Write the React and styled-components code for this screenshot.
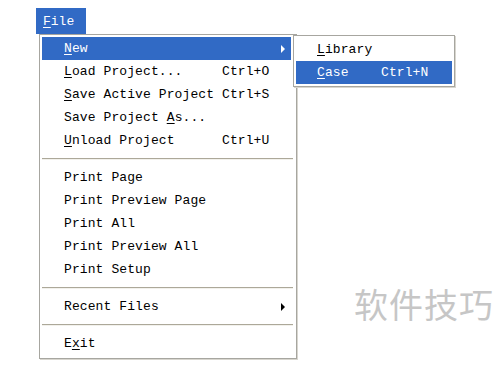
import React from "react";
import styled, { createGlobalStyle } from "styled-components";

const GlobalStyle = createGlobalStyle`
  html, body {
    margin: 0;
    padding: 0;
    background: #ffffff;
  }
  body {
    font-family: "Liberation Mono", "Noto Sans CJK SC", monospace;
  }
`;

const Page = styled.div`
  position: relative;
  width: 500px;
  height: 368px;
  overflow: hidden;
  background: #ffffff;
  padding: 8px 0 0 36px;
  box-sizing: border-box;
  display: flex;
  flex-direction: column;
  align-items: flex-start;
`;

const MenuTab = styled.div`
  width: 50px;
  height: 26px;
  box-sizing: border-box;
  padding-left: 7px;
  display: flex;
  align-items: center;
  background: #316ac5;
  color: #ffffff;
  font-size: 13px;
`;

const Menu = styled.div`
  margin-left: 3px;
  width: 258px;
  box-sizing: border-box;
  border: 1px solid #a7a6a0;
  box-shadow: 1px 1px 0 #d8d6cf;
  background: #ffffff;
  padding: 2px 5px 3px 2px;
  display: flex;
  flex-direction: column;
`;

const Row = styled.div`
  height: 23px;
  display: flex;
  align-items: center;
  padding-left: 22px;
  padding-right: 6px;
  font-size: 13px;
  letter-spacing: 0.1px;
  color: ${(p) => (p.$active ? "#ffffff" : "#000000")};
  background: ${(p) => (p.$active ? "#316ac5" : "transparent")};
  white-space: pre;
`;

const Label = styled.span`
  width: ${(p) => (p.$width ? `${p.$width}px` : "auto")};
  flex-shrink: 0;
`;

const Shortcut = styled.span``;

const Key = styled.span`
  text-decoration: underline;
  text-underline-offset: 2px;
`;

const Arrow = styled.span`
  width: 0;
  height: 0;
  margin-left: auto;
  border-top: 4px solid transparent;
  border-bottom: 4px solid transparent;
  border-left: 4px solid ${(p) => (p.$light ? "#ffffff" : "#000000")};
`;

const Separator = styled.div`
  height: 14px;
  display: flex;
  align-items: center;
  &::after {
    content: "";
    flex: 1;
    margin-right: -2px;
    border-top: 1px solid #aca899;
    border-bottom: 1px solid #f2f1ec;
  }
`;

const SubMenu = styled.div`
  position: absolute;
  left: 293px;
  top: 35px;
  width: 162px;
  box-sizing: border-box;
  border: 1px solid #a7a6a0;
  box-shadow: 1px 1px 0 #d8d6cf;
  background: #ffffff;
  padding: 2px;
  display: flex;
  flex-direction: column;
`;

const SubRow = styled(Row)`
  padding-left: 21px;
`;

const Watermark = styled.div`
  position: absolute;
  left: 354px;
  top: 279px;
  font-family: "Noto Sans CJK SC", sans-serif;
  font-size: 34px;
  color: #c6c6c6;
  letter-spacing: 1px;
`;

const items = [
  { label: <><Key>N</Key>ew</>, active: true, sub: true },
  { label: <><Key>L</Key>oad Project...</>, shortcut: "Ctrl+O" },
  { label: <><Key>S</Key>ave Active Project</>, shortcut: "Ctrl+S" },
  { label: <>Save Project <Key>A</Key>s...</> },
  { label: <><Key>U</Key>nload Project</>, shortcut: "Ctrl+U" },
  { sep: true },
  { label: "Print Page" },
  { label: "Print Preview Page" },
  { label: "Print All" },
  { label: "Print Preview All" },
  { label: "Print Setup" },
  { sep: true },
  { label: "Recent Files", sub: true },
  { sep: true },
  { label: <>E<Key>x</Key>it</> },
];

export default function App() {
  return (
    <>
      <GlobalStyle />
      <Page>
        <MenuTab>
          <Key>F</Key>ile
        </MenuTab>
        <Menu>
          {items.map((item, index) =>
            item.sep ? (
              <Separator key={index} />
            ) : (
              <Row key={index} $active={item.active}>
                <Label $width={158}>{item.label}</Label>
                {item.shortcut && <Shortcut>{item.shortcut}</Shortcut>}
                {item.sub && <Arrow $light={item.active} />}
              </Row>
            )
          )}
        </Menu>
        <SubMenu>
          <SubRow>
            <Label>
              <Key>L</Key>ibrary
            </Label>
          </SubRow>
          <SubRow $active>
            <Label $width={64}>
              <Key>C</Key>ase
            </Label>
            <Shortcut>Ctrl+N</Shortcut>
          </SubRow>
        </SubMenu>
        <Watermark>软件技巧</Watermark>
      </Page>
    </>
  );
}
